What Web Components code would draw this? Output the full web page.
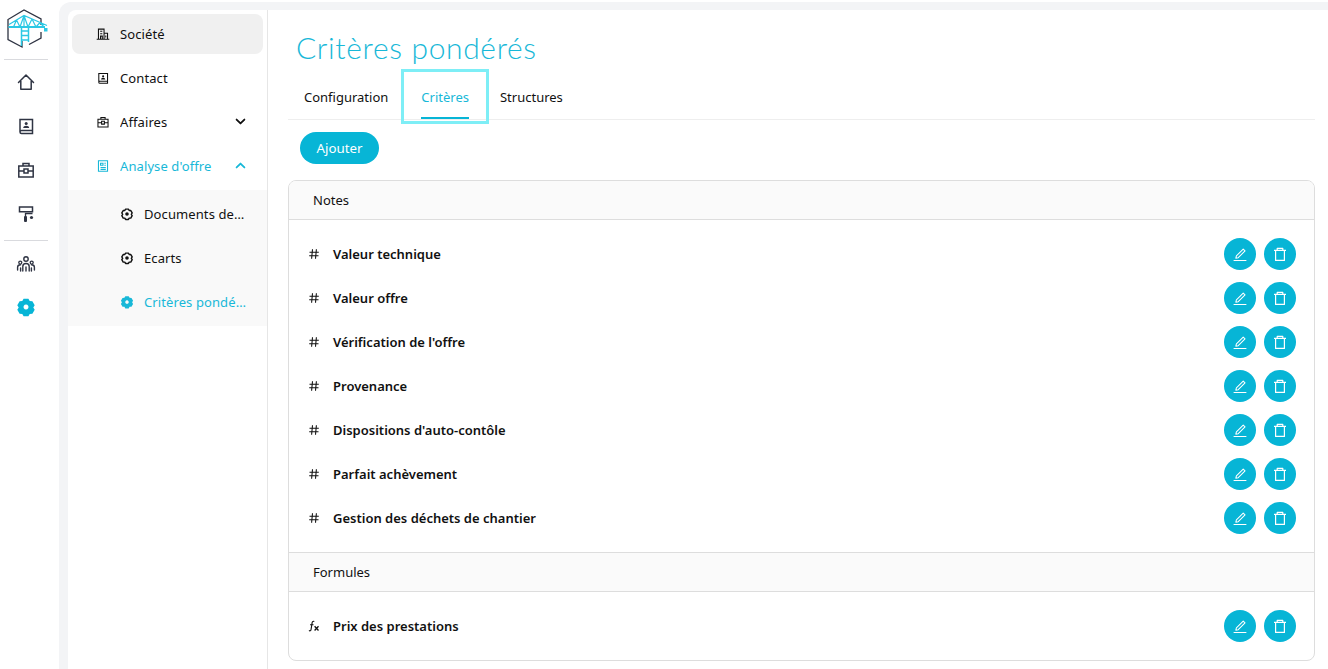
<!DOCTYPE html>
<html lang="fr">
<head>
<meta charset="utf-8">
<title>Critères pondérés</title>
<style>
  html, body { margin: 0; height: 100%; overflow: hidden; }
  body { font-family: "Noto Sans", "Open Sans", sans-serif; font-size: 13px; color: #111; background: #fff; }
</style>
</head>
<body>
<app-shell>
  <nav-rail slot="rail"></nav-rail>
  <side-menu slot="menu"></side-menu>
  <criteres-page slot="page"></criteres-page>
</app-shell>

<script>
// Icons

const GEAR_OUTLINE = 'M7.6 1.800h4.800l1.300 2.300 2.700.1 2.300 4-1.400 2.300 1.400 2.300-2.300 4-2.700.1-1.300 2.300H7.600l-1.300-2.300-2.700-.1-2.300-4 1.400-2.300-1.400-2.300 2.300-4 2.700-.1Z';

const ICONS = {
    home: '<path d="M2.500 10.500 10 3l7.500 7.500M4.800 9v8.200h10.400V9" fill="none" stroke-width="1.500" stroke-linejoin="round" stroke-linecap="round"/>',
    contact: '<path d="M4 16V3.500h12.500v14H5.500A1.500 1.500 0 0 1 4 16Zm0 0a1.500 1.500 0 0 1 1.500-1.500h11" fill="none" stroke-width="1.500"/><circle cx="10.200" cy="7.400" r="1.500" stroke="none" fill="currentColor"/><path d="M7.200 12c0-3 6-3 6 0Z" stroke="none" fill="currentColor"/>',
    briefcase: '<path d="M7 6V3.500h6V6M2.800 6h14.400v11H2.800ZM2.800 11h5M12.200 11h5M8 9h4v4H8Z" fill="none" stroke-width="1.500"/>',
    roller: '<path d="M3.500 3h13v4.800h-13Z" fill="none" stroke-width="1.500"/><path d="M16.500 9.500H9.500V12" fill="none" stroke-width="1.300"/><rect x="8" y="12" width="3" height="6" rx="1" fill="currentColor" stroke="none"/><circle cx="15.500" cy="13.500" r="1.600" fill="currentColor" stroke="none"/>',
    team: '<circle cx="10" cy="5" r="2.200" fill="none" stroke-width="1.400"/><circle cx="4.300" cy="8.600" r="1.500" fill="none" stroke-width="1.300"/><circle cx="15.700" cy="8.600" r="1.500" fill="none" stroke-width="1.300"/><path d="M6.800 17v-4.500c0-4 6.400-4 6.400 0V17M1.600 16v-2.800c0-1.800 1.500-2.500 3-2.500M18.400 16v-2.800c0-1.800-1.500-2.500-3-2.500M4.600 14v3M15.400 14v3M10 13v4" fill="none" stroke-width="1.400" stroke-linecap="round"/>',
    gear: '<path fill-rule="evenodd" stroke="none" fill="currentColor" d="' + GEAR_OUTLINE + 'M10 7.500a2.500 2.500 0 1 0 .01 0Z"/>',
    gearline: '<g transform="translate(1.500 1.500) scale(.85)"><path fill="none" stroke-width="2.400" stroke-linejoin="round" d="' + GEAR_OUTLINE + '"/><circle cx="10" cy="10" r="3" fill="currentColor" stroke="none"/></g>',
    building: '<path d="M1 17.500h18M3.500 17.500V3h8v14.500M11.500 9H16.500v8.500M6 6h3M6 9.500h3M6.500 17v-4h2.500v4M14 12v3" fill="none" stroke-width="1.500"/>',
    sheet: '<path d="M3.500 2.500h13v15h-13ZM6.500 6h3.500v3H6.500ZM12 6h2M12 9h2M6.500 12h7.500M6.500 14.800h7.500" fill="none" stroke-width="1.500"/>',
    chevdown: '<path d="M4 7l6 6 6-6" fill="none" stroke-width="2.800" stroke-linecap="round" stroke-linejoin="round"/>',
    chevup: '<path d="M4 13l6-6 6 6" fill="none" stroke-width="2.800" stroke-linecap="round" stroke-linejoin="round"/>',
    hash: '<path d="M7.500 2 6 18M14 2l-1.500 16M2.500 7h15.500M2 13h15.500" fill="none" stroke-width="1.800"/>',
    fx: '<path d="M10.500 2.500C8.600 1.500 7.200 2.400 6.900 4.400L5 16.200C4.700 18 3.200 18.500 1.500 17.500M3.400 8h5.800" fill="none" stroke-width="1.900"/><path d="M11 10.500l6.500 7M17.500 10.500l-6.500 7" fill="none" stroke-width="2.200"/>',
    pencil: '<path d="M5.500 12.300 14 3.800l2.300 2.300-8.500 8.500-3 .7ZM2.500 18.200h15" fill="none" stroke-width="1.300" stroke-linejoin="round" stroke-linecap="round"/>',
    trash: '<path d="M2.500 5.500h15M6.500 5.500V3h7v2.500M4.500 5.500V18h11V5.500" fill="none" stroke-width="1.500" stroke-linejoin="round"/>'
};

function icon(name, size) {
    return `<svg viewBox="0 0 20 20" width="${size}" height="${size}" stroke="currentColor" aria-hidden="true">${ICONS[name]}</svg>`;
}

// Web Components

class AppShell extends HTMLElement {
    constructor() {
        super();
        this.attachShadow({mode: 'open'}).innerHTML = `
            <style>
                :host { display: flex; height: 669px; background: #fff; }
                .rail { flex: 0 0 59px; background: #fff; display: flex; }
                .stage {
                    flex: 1;
                    min-width: 0;
                    margin-top: 2px;
                    padding: 8px 0 0 9px;
                    background: #f3f4f6;
                    border-top-left-radius: 12px;
                    display: flex;
                }
                .work {
                    flex: 1;
                    min-width: 0;
                    display: flex;
                    background: #fff;
                    border-top-left-radius: 8px;
                    overflow: hidden;
                }
                .menu { flex: 0 0 199px; display: flex; border-right: 1px solid #e6e6e6; }
                .page { flex: 1; min-width: 0; display: flex; }
            </style>
            <div class="rail"><slot name="rail"></slot></div>
            <div class="stage">
                <div class="work">
                    <div class="menu"><slot name="menu"></slot></div>
                    <div class="page"><slot name="page"></slot></div>
                </div>
            </div>
        `;
    }
}

class NavRail extends HTMLElement {
    constructor() {
        super();
        let entries = (names) => names.map(n =>
            `<div class="entry ${n == 'gear' ? 'on' : ''}">${icon(n, 20)}</div>`).join('');

        this.attachShadow({mode: 'open'}).innerHTML = `
            <style>
                :host { display: block; width: 52px; color: #2f3443; }
                .logo { height: 59px; display: block; }
                .logo svg { display: block; }
                .entry { height: 44px; display: flex; align-items: center; justify-content: center; }
                .entry.on { color: #07b5d6; margin-top: -1px; }
                .sep { height: 1px; background: #d9dade; margin: 0 4px; }
                .first { padding-bottom: 4px; }
                .second { padding-top: 1px; }
            </style>
            <div class="logo">
                <svg viewBox="0 0 52 59" width="52" height="59">
                    <path d="M41 25V19L24 10 8 19.500V39.500L22 47V41M41 32V38L29 44.500" fill="none" stroke="#2f3443" stroke-width="1.300"/>
                    <path d="M9 24.500 24 15.500 47 25.500M24 15.500V27M24 15.500 20 27M24 15.500 28 27M16.500 20 13.500 27M16.500 20 20 27M32 19 28 27M32 19 36 27M40 22.500 36 27M40 22.500 44 27" fill="none" stroke="#2cc8e4" stroke-width="1.200"/>
                    <path d="M8.500 27H45" fill="none" stroke="#2cc8e4" stroke-width="1.800"/>
                    <path d="M21.500 27V46M28.500 27V42M21.500 31h7M21.500 35.500h7M21.500 40h7" fill="none" stroke="#2cc8e4" stroke-width="1.500"/>
                    <rect x="44" y="28" width="3.500" height="3.500" fill="#2cc8e4"/>
                </svg>
            </div>
            <div class="sep"></div>
            <div class="first">${entries(['home', 'contact', 'briefcase', 'roller'])}</div>
            <div class="sep"></div>
            <div class="second">${entries(['team', 'gear'])}</div>
        `;
    }
}

class MenuItem extends HTMLElement {
    connectedCallback() {
        let name = this.getAttribute('icon');
        let chevron = this.getAttribute('chevron');
        this.attachShadow({mode: 'open'}).innerHTML = `
            <style>
                :host { display: block; height: 44px; padding: 2px 4px; box-sizing: border-box; color: #111; letter-spacing: .1px; }
                :host([active]) { color: #18b8d8; }
                .box { height: 40px; display: flex; align-items: center; padding-left: 24px; border-radius: 8px; gap: 10px; }
                :host([selected]) .box { background: #f0f0f0; }
                :host([sub]) .box { padding-left: 48px; }
                .label { flex: 1; white-space: nowrap; overflow: hidden; text-overflow: ellipsis; min-width: 0; padding-right: 16px; }
                .chev { display: flex; margin: -2px 16px 0 -16px; }
                svg { flex: none; }
            </style>
            <div class="box">
                ${icon(name, 14)}
                <span class="label"><slot></slot></span>
                ${chevron ? `<span class="chev">${icon(chevron, 13)}</span>` : ''}
            </div>
        `;
    }
}

class SideMenu extends HTMLElement {
    constructor() {
        super();
        this.attachShadow({mode: 'open'}).innerHTML = `
            <style>
                :host { display: block; width: 199px; padding-top: 2px; }
                .sub { background: #f9f9f9; padding: 2px 0; margin-top: 2px; }
            </style>
            <menu-item icon="building" selected>Société</menu-item>
            <menu-item icon="contact">Contact</menu-item>
            <menu-item icon="briefcase" chevron="chevdown">Affaires</menu-item>
            <menu-item icon="sheet" chevron="chevup" active>Analyse d'offre</menu-item>
            <div class="sub">
                <menu-item icon="gearline" sub>Documents demandés</menu-item>
                <menu-item icon="gearline" sub>Ecarts</menu-item>
                <menu-item icon="gear" sub active>Critères pondérés</menu-item>
            </div>
        `;
    }
}

class TabBar extends HTMLElement {
    constructor() {
        super();
        this.attachShadow({mode: 'open'}).innerHTML = `
            <style>
                :host { display: flex; height: 48px; border-bottom: 1px solid #eee; }
                .tab { position: relative; padding: 3px 16px 0; box-sizing: border-box; display: flex; align-items: center; height: 48px; white-space: nowrap; }
                .tab:first-child { padding-right: 17px; }
                .tab.on { color: #18b8d8; padding: 3px 33px 0; margin: 0 -18px 0 -16px; }
                .tab.on::after { content: ""; position: absolute; left: 33px; right: 33px; bottom: 0; height: 2px; background: #07b5d6; }
                .tab.on::before {
                    content: "";
                    position: absolute;
                    left: 13px; right: 13px; top: -2px; bottom: -5px;
                    border: 3px solid #7eeef6;
                }
            </style>
            <div class="tab">Configuration</div>
            <div class="tab on">Critères</div>
            <div class="tab">Structures</div>
        `;
    }
}

class RoundButton extends HTMLElement {
    connectedCallback() {
        this.attachShadow({mode: 'open'}).innerHTML = `
            <style>
                :host { display: flex; width: 32px; height: 32px; border-radius: 50%; background: #07b5d6; color: #fff; align-items: center; justify-content: center; }
            </style>
            ${icon(this.getAttribute('icon'), 16)}
        `;
    }
}

class CriterionRow extends HTMLElement {
    connectedCallback() {
        let name = this.getAttribute('icon') || 'hash';
        this.attachShadow({mode: 'open'}).innerHTML = `
            <style>
                :host { display: flex; align-items: center; height: 44px; padding: 0 18px 0 19px; font-weight: 600; color: #111; }
                .label { flex: 1; margin-left: 13px; }
                .actions { display: flex; gap: 8px; }
                svg { flex: none; }
            </style>
            ${icon(name, 12)}
            <span class="label"><slot></slot></span>
            <span class="actions">
                <round-button icon="pencil"></round-button>
                <round-button icon="trash"></round-button>
            </span>
        `;
    }
}

class CardHeader extends HTMLElement {
    constructor() {
        super();
        this.attachShadow({mode: 'open'}).innerHTML = `
            <style>
                :host { display: flex; align-items: center; height: 38px; padding-left: 24px; background: #fafafa; border-bottom: 1px solid #ddd; }
            </style>
            <slot></slot>
        `;
    }
}

class CriteresPage extends HTMLElement {
    constructor() {
        super();
        this.attachShadow({mode: 'open'}).innerHTML = `
            <style>
                :host { display: block; flex: 1; min-width: 0; padding: 0 13px 0 20px; }
                h1 {
                    margin: 0;
                    height: 61px;
                    padding: 16px 0 0 8px;
                    box-sizing: border-box;
                    font: 300 30px/42px Lato, "Noto Sans", sans-serif;
                    color: #18b8d8;
                    letter-spacing: .65px;
                }
                .add { margin: 12px 0 16px 12px; height: 32px; display: block; }
                button {
                    display: block;
                    height: 32px;
                    width: 79px;
                    border: 0;
                    border-radius: 16px;
                    background: #07b5d6;
                    color: #fff;
                    font: inherit;
                    font-size: 13.3px;
                    padding: 0;
                }
                .card { border: 1px solid #ddd; border-radius: 8px; overflow: hidden; height: 479px; }
                .rows { padding: 12px 0; }
                .second { border-top: 1px solid #ddd; }
            </style>
            <h1>Critères pondérés</h1>
            <tab-bar></tab-bar>
            <div class="add"><button>Ajouter</button></div>
            <div class="card">
                <card-header>Notes</card-header>
                <div class="rows">
                    <criterion-row>Valeur technique</criterion-row>
                    <criterion-row>Valeur offre</criterion-row>
                    <criterion-row>Vérification de l'offre</criterion-row>
                    <criterion-row>Provenance</criterion-row>
                    <criterion-row>Dispositions d'auto-contôle</criterion-row>
                    <criterion-row>Parfait achèvement</criterion-row>
                    <criterion-row>Gestion des déchets de chantier</criterion-row>
                </div>
                <card-header class="second">Formules</card-header>
                <div class="rows">
                    <criterion-row icon="fx">Prix des prestations</criterion-row>
                </div>
            </div>
        `;
    }
}

customElements.define('app-shell',     AppShell);
customElements.define('nav-rail',      NavRail);
customElements.define('menu-item',     MenuItem);
customElements.define('side-menu',     SideMenu);
customElements.define('tab-bar',       TabBar);
customElements.define('round-button',  RoundButton);
customElements.define('criterion-row', CriterionRow);
customElements.define('card-header',   CardHeader);
customElements.define('criteres-page', CriteresPage);
</script>
</body>
</html>
